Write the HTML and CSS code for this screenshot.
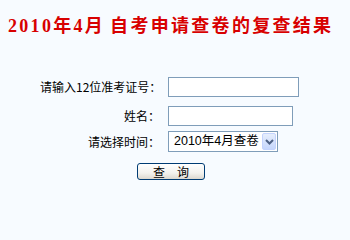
FILE: index.html
```html
<!DOCTYPE html>
<html lang="zh-CN">
<head>
<meta charset="utf-8">
<title>2010年4月自考申请查卷的复查结果</title>
<link rel="stylesheet" href="styles.css">
</head>
<body>
<h1 class="title">2010年4月<span class="title-rest">自考申请查卷的复查结果</span></h1>
<form class="query-form">
  <div class="row row-id">
    <label class="label" for="zkz">请输入12位准考证号：</label>
    <input class="text-input wide" id="zkz" type="text">
  </div>
  <div class="row row-name">
    <label class="label" for="xm">姓名：</label>
    <input class="text-input narrow" id="xm" type="text">
  </div>
  <div class="row row-time">
    <span class="label">请选择时间：</span>
    <div class="select">
      <span class="select-text">2010年4月查卷</span>
      <span class="select-arrow">
        <svg width="9" height="6" viewBox="0 0 9 6"><path d="M1 1 L4.5 4.5 L8 1" fill="none" stroke="#4d6185" stroke-width="2"/></svg>
      </span>
    </div>
  </div>
  <div class="row row-btn">
    <button class="btn" type="button">查　询</button>
  </div>
</form>
</body>
</html>
```
FILE: styles.css
```css
html, body {
  background: #f7fbff;
}
body {
  margin: 8px;
  font-family: "Noto Sans CJK SC", sans-serif;
  color: #000;
}
.title {
  margin: 6px 0 0 0;
  height: 24px;
  line-height: 24px;
  font-family: "Liberation Serif", "Noto Sans CJK SC", serif;
  font-size: 18px;
  font-weight: bold;
  letter-spacing: 2.3px;
  color: #d80000;
  white-space: nowrap;
}
.title-rest {
  margin-left: 5px;
}
.query-form {
  margin: 39px 0 0 32px;
  display: flex;
  flex-direction: column;
}
.row {
  display: flex;
  align-items: center;
}
.row-name { margin-top: 9px; }
.row-time { margin-top: 5px; }
.row-btn { margin-top: 11px; padding-left: 97px; }
.label {
  width: 120px;
  margin-right: 8px;
  text-align: right;
  font-size: 12px;
  line-height: 14px;
  white-space: nowrap;
}
.text-input {
  box-sizing: border-box;
  height: 20px;
  border: 1px solid #7f9db9;
  background: #fff;
  padding: 0 3px;
  margin: 0;
  outline: none;
}
.text-input.wide { width: 131px; }
.text-input.narrow { width: 125px; }
.select {
  box-sizing: border-box;
  width: 110px;
  height: 21px;
  border: 1px solid #7f9db9;
  background: #fff;
  display: flex;
  align-items: center;
  padding: 1px;
}
.select-text {
  flex: 1;
  min-width: 0;
  overflow: hidden;
  padding-left: 4px;
  font-family: "Liberation Sans", "Noto Sans CJK SC", sans-serif;
  font-size: 12.5px;
  line-height: 17px;
  white-space: nowrap;
}
.select-arrow {
  box-sizing: border-box;
  flex: none;
  width: 14px;
  height: 17px;
  border: 1px solid #c3d3fd;
  border-radius: 2px;
  background: linear-gradient(#e6eefc, #c5d6fc);
  display: flex;
  align-items: center;
  justify-content: center;
}
.select-arrow svg { display: block; }
.btn {
  box-sizing: border-box;
  width: 68px;
  height: 17px;
  margin: 0;
  padding: 0;
  border: 1px solid #003c74;
  border-radius: 3px;
  background: linear-gradient(#ffffff, #f3f2ee 60%, #dcd8cf);
  font-family: "Noto Sans CJK SC", sans-serif;
  font-size: 12px;
  line-height: 15px;
  color: #000;
}
```
